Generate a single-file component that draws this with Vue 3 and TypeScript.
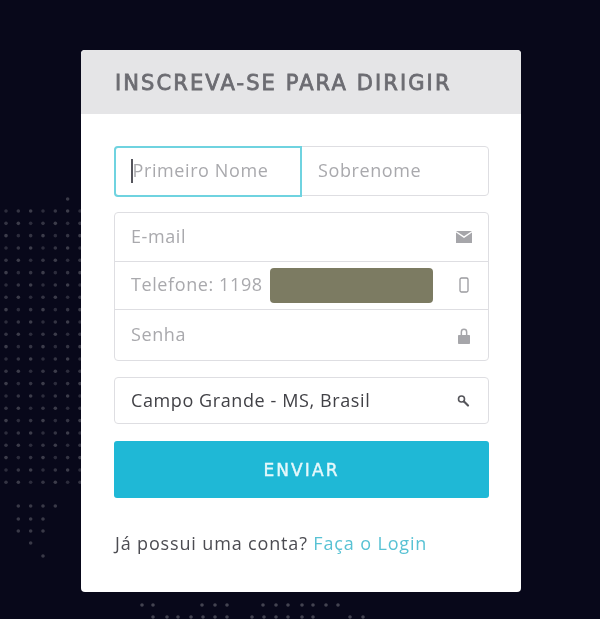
<script setup lang="ts">
import { computed } from 'vue'

const stepX = 12.33
const stepY = 12.33
const col = (i: number) => 6 + i * stepX
const row = (j: number) => 211 + j * stepY

const dots = computed(() => {
  const out: { x: number; y: number; o: number }[] = []
  const add = (x: number, y: number, o = 0.2) => out.push({ x, y, o })
  add(col(5), 199)
  for (let j = 0; j < 23; j++) for (let i = 0; i < 7; i++) add(col(i), row(j), 0.15 + ((i + j) % 3) * 0.03)
  for (let i = 1; i < 5; i++) add(col(i), 506)
  for (let i = 1; i < 4; i++) { add(col(i), 519); add(col(i), 531) }
  add(col(2), 543)
  add(col(3), 556)
  for (const x of [142, 153, 202, 215, 227, 263, 276, 288, 302, 313, 326, 338]) add(x, 605, 0.24)
  for (const x of [153, 167, 178, 191, 203, 215, 227, 252, 264, 276, 288, 302, 313, 350, 363]) add(x, 617, 0.24)
  return out
})
</script>

<template>
  <main class="page">
    <svg class="dots" width="600" height="619" viewBox="0 0 600 619" aria-hidden="true">
      <circle v-for="(d, i) in dots" :key="i" :cx="d.x" :cy="d.y" r="1.8" fill="#fff" :opacity="d.o" />
    </svg>

    <section class="card">
      <header class="card-head"><h1>INSCREVA-SE PARA DIRIGIR</h1></header>
      <form class="card-body" @submit.prevent>
        <div class="group split">
          <label class="field focused">
            <span class="caret"></span>
            <input placeholder="Primeiro Nome" aria-label="Primeiro Nome" />
          </label>
          <label class="field"><input placeholder="Sobrenome" aria-label="Sobrenome" /></label>
        </div>

        <div class="group stack">
          <label class="field">
            <input placeholder="E-mail" aria-label="E-mail" />
            <svg class="icon" width="18" height="14" viewBox="0 0 18 14">
              <path d="M1 1h16L9 6.2z" fill="#a6a6aa" />
              <path d="M1 2.6l8 5.4 8-5.4V13H1z" fill="#a6a6aa" />
            </svg>
          </label>
          <label class="field">
            <input placeholder="Telefone: 1198" aria-label="Telefone" />
            <span class="redacted"></span>
            <svg class="icon" width="18" height="16" viewBox="0 0 18 16">
              <rect x="5" y="1" width="8" height="14" rx="1.5" fill="none" stroke="#9a9a9e" stroke-width="1.3" />
            </svg>
          </label>
          <label class="field">
            <input placeholder="Senha" aria-label="Senha" />
            <svg class="icon lock" width="18" height="18" viewBox="0 0 18 18">
              <path d="M5.6 8V5a3.4 3.4 0 0 1 6.8 0v3h-1.5V5a1.9 1.9 0 0 0-3.8 0v3z" fill="#a6a6aa" />
              <rect x="3" y="8" width="12" height="9" rx="0.8" fill="#a6a6aa" />
            </svg>
          </label>
        </div>

        <div class="group">
          <label class="field city">
            <input value="Campo Grande - MS, Brasil" aria-label="Cidade" />
            <svg class="icon" width="18" height="14" viewBox="0 0 18 14">
              <circle cx="6.5" cy="5" r="3" fill="none" stroke="#55555a" stroke-width="1.6" />
              <path d="M9 7.5l4 4" stroke="#55555a" stroke-width="2.2" stroke-linecap="round" />
            </svg>
          </label>
        </div>

        <button type="submit" class="submit">ENVIAR</button>

        <p class="foot">Já possui uma conta? <a href="#" @click.prevent>Faça o Login</a></p>
      </form>
    </section>
  </main>
</template>

<style>
html, body { margin: 0; background: #08081a; }
</style>

<style scoped>
.page {
  position: relative;
  width: 600px;
  height: 619px;
  overflow: hidden;
  background: #08081a;
  padding-top: 50px;
  box-sizing: border-box;
  font-family: "Open Sans", "Noto Sans", sans-serif;
  filter: blur(0.5px);
}
.dots { position: absolute; inset: 0; }
.card {
  position: relative;
  width: 440px;
  height: 542px;
  margin-left: 81px;
  background: #fff;
  border-radius: 4px;
  overflow: hidden;
}
.card-head {
  height: 64px;
  background: #e5e5e7;
  display: flex;
  align-items: center;
  padding-left: 34px;
}
.card-head h1 {
  margin: 2px 0 0;
  font-family: "DejaVu Sans", sans-serif;
  font-size: 21px;
  font-weight: 400;
  letter-spacing: 2.1px;
  white-space: nowrap;
  -webkit-text-stroke: 0.8px #6c6c72;
  color: #6c6c72;
}
.card-body {
  padding: 32px 32px 0 33px;
  display: flex;
  flex-direction: column;
}
.group {
  border: 1.5px solid #dedee2;
  border-radius: 4px;
  box-sizing: border-box;
}
.split { display: grid; grid-template-columns: 187px 1fr; height: 50px; margin-bottom: 16px; }
.stack { height: 149px; display: flex; flex-direction: column; margin-bottom: 16px; }
.stack .field { flex: 0 0 47.5px; box-sizing: content-box; }
.stack .field:last-child { flex: 1 1 0; min-height: 0; }
.stack .field + .field { border-top: 1.5px solid #dedee2; }
.field {
  position: relative;
  display: flex;
  align-items: center;
  padding: 0 16px;
  min-width: 0;
}
input {
  flex: 1;
  min-width: 0;
  width: 100%;
  border: 0;
  outline: 0;
  padding: 0 0 2px 0;
  background: transparent;
  font: inherit;
  font-size: 18px;
  letter-spacing: 0.6px;
  color: #414146;
}
input::placeholder { color: #a9a9ad; opacity: 1; }
.focused {
  margin: -1.5px 0 -1.5px -1.5px;
  border: 2px solid #6fd3e0;
  border-radius: 4px 0 0 4px;
  padding-left: 17px;
}
.caret {
  position: absolute;
  left: 15px;
  top: 11px;
  width: 2px;
  height: 24px;
  background: #55555c;
}
.icon { flex: none; margin-right: -1px; }
.lock { margin-top: 2px; }
.redacted {
  position: absolute;
  left: 155px;
  top: 6.5px;
  width: 163px;
  height: 35px;
  border-radius: 4px;
  background: #7c7b62;
}
.city { height: 45px; }
.submit {
  height: 57px;
  margin-top: 17px;
  border: 0;
  border-radius: 3px;
  background: #1fb8d6;
  color: #e6f8fb;
  font-family: "DejaVu Sans", sans-serif;
  font-size: 17px;
  font-weight: 400;
  letter-spacing: 2.1px;
  -webkit-text-stroke: 0.4px #e6f8fb;
}
.foot {
  margin: 32px 0 0;
  padding-left: 1px;
  font-size: 18px;
  letter-spacing: 0.85px;
  line-height: 26px;
  color: #4c4c52;
}
.foot a { color: #58c2d4; text-decoration: none; }
</style>
